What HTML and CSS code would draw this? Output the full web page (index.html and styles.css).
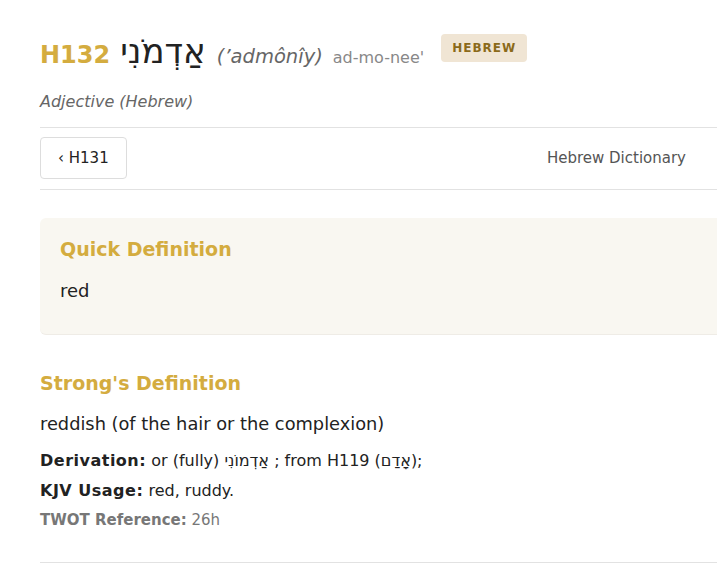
FILE: index.html
```html
<!DOCTYPE html>
<html lang="en">
<head>
<meta charset="utf-8">
<title>H132 אַדְמֹנִי - Strong's Hebrew Dictionary</title>
<link rel="stylesheet" href="styles.css">
</head>
<body>
<main class="page">
  <header class="entry-head">
    <h1 class="title">
      <span class="strongs-num">H132</span>
      <span class="lemma" lang="he" dir="rtl">אַדְמֹנִי</span>
      <span class="translit">(’admônîy)</span>
      <span class="pron">ad-mo-nee'</span>
      <span class="badge">HEBREW</span>
    </h1>
    <p class="pos">Adjective (Hebrew)</p>
  </header>

  <nav class="entry-nav">
    <a class="nav-btn" href="#">‹ H131</a>
    <a class="nav-link" href="#">Hebrew Dictionary</a>
  </nav>

  <section class="quick-def">
    <h2 class="section-title">Quick Definition</h2>
    <p class="quick-text">red</p>
  </section>

  <section class="strongs-def">
    <h2 class="section-title">Strong's Definition</h2>
    <p class="def-text">reddish (of the hair or the complexion)</p>
    <p class="meta-line first"><strong>Derivation:</strong> or (fully) <span lang="he" dir="rtl">אַדְמוֹנִי</span> ; from H119 (<span lang="he" dir="rtl">אָדַם</span>);</p>
    <p class="meta-line"><strong>KJV Usage:</strong> red, ruddy.</p>
    <p class="meta-line twot"><strong>TWOT Reference:</strong> 26h</p>
  </section>
</main>
</body>
</html>
```

FILE: styles.css
```css
* { box-sizing: border-box; }

html, body {
  margin: 0;
  padding: 0;
  background: #ffffff;
  overflow: hidden;
}

body {
  font-family: "DejaVu Sans", Verdana, sans-serif;
  color: #222222;
}

.page {
  width: 700px;
  margin-left: 40px;
  padding-top: 34px;
}

.entry-head {
  padding-bottom: 16px;
  border-bottom: 1px solid #e2e2e2;
}

.title {
  margin: 0;
  display: flex;
  align-items: baseline;
  font-weight: normal;
  line-height: 34px;
}

.strongs-num {
  font-size: 24px;
  font-weight: bold;
  color: #d4ac3f;
}

.lemma {
  font-size: 34px;
  color: #222222;
  margin-left: 10px;
}

.translit {
  font-size: 19.5px;
  font-style: italic;
  color: #666666;
  margin-left: 11px;
}

.pron {
  font-size: 16px;
  color: #888888;
  margin-left: 10px;
}

.badge {
  align-self: flex-start;
  margin-left: 17px;
  background: #f0e5d4;
  color: #8b6a1a;
  font-size: 12px;
  font-weight: bold;
  letter-spacing: 1px;
  line-height: 28px;
  padding: 0 11px;
  border-radius: 4px;
}

.pos {
  margin: 17px 0 0;
  font-size: 16px;
  font-style: italic;
  color: #666666;
}

.entry-nav {
  display: flex;
  justify-content: space-between;
  align-items: center;
  padding: 9px 0 10px;
  border-bottom: 1px solid #e2e2e2;
}

.nav-btn {
  display: block;
  height: 42px;
  line-height: 40px;
  padding: 0 17px;
  border: 1px solid #dddddd;
  border-radius: 4px;
  font-size: 15px;
  color: #222222;
  text-decoration: none;
}

.nav-link {
  font-size: 15px;
  color: #555555;
  text-decoration: none;
  margin-right: 54px;
}

.quick-def {
  margin-top: 28px;
  background: #f9f7f1;
  border-radius: 6px;
  border-bottom: 1px solid #efece6;
  padding: 18px 20px 24px;
  height: 117px;
}

.section-title {
  margin: 0;
  font-size: 19px;
  font-weight: bold;
  color: #d4ac3f;
  line-height: 26px;
}

.quick-text {
  margin: 17px 0 0;
  font-size: 18px;
  line-height: 24px;
}

.strongs-def {
  padding-top: 35px;
  padding-bottom: 31px;
  border-bottom: 1px solid #e2e2e2;
}

.def-text {
  margin: 15px 0 0;
  font-size: 17.8px;
  line-height: 26px;
}

.meta-line {
  margin: 8px 0 0;
  font-size: 16px;
  line-height: 22px;
}

.meta-line strong {
  letter-spacing: 0.5px;
}

.meta-line.first {
  margin-top: 13px;
}

.twot {
  margin-top: 7px;
  font-size: 15px;
  color: #777777;
}

.twot strong {
  color: #777777;
  letter-spacing: 0;
}
```
